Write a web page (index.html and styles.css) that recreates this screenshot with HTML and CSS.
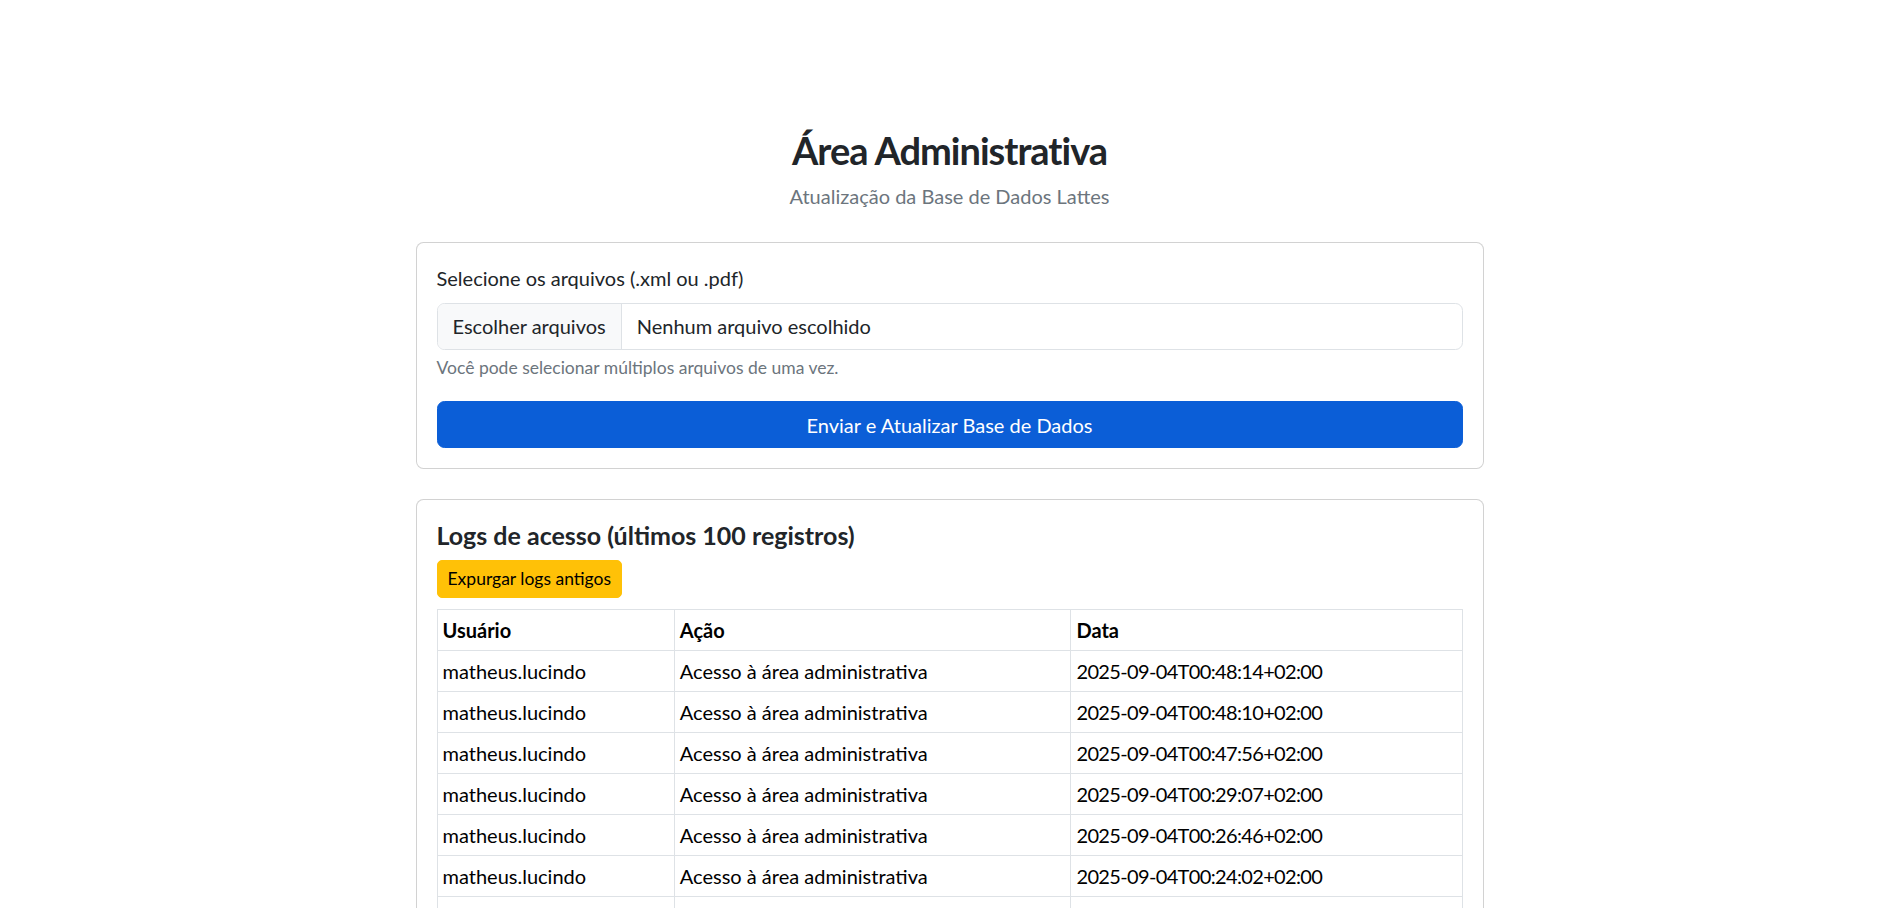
FILE: index.html
```html
<!DOCTYPE html>
<html lang="pt-BR">
<head>
<meta charset="utf-8">
<title>Área Administrativa</title>
<link rel="stylesheet" href="styles.css">
</head>
<body>
<main class="page">
  <header class="page-head">
    <h2 class="title">Área Administrativa</h2>
    <p class="subtitle">Atualização da Base de Dados Lattes</p>
  </header>

  <section class="card">
    <form class="upload">
      <div class="field">
        <label class="label">Selecione os arquivos (.xml ou .pdf)</label>
        <div class="file-input">
          <span class="file-btn">Escolher arquivos</span>
          <span class="file-name">Nenhum arquivo escolhido</span>
        </div>
        <div class="form-text">Você pode selecionar múltiplos arquivos de uma vez.</div>
      </div>
      <button type="button" class="btn-primary">Enviar e Atualizar Base de Dados</button>
    </form>
  </section>

  <section class="card card-logs">
    <h5 class="logs-title">Logs de acesso (últimos 100 registros)</h5>
    <button type="button" class="btn-warning">Expurgar logs antigos</button>
    <table class="logs">
      <colgroup>
        <col class="c-user"><col class="c-action"><col class="c-date">
      </colgroup>
      <thead>
        <tr><th>Usuário</th><th>Ação</th><th>Data</th></tr>
      </thead>
      <tbody>
        <tr><td>matheus.lucindo</td><td>Acesso à área administrativa</td><td class="date">2025-09-04T00:48:14+02:00</td></tr>
        <tr><td>matheus.lucindo</td><td>Acesso à área administrativa</td><td class="date">2025-09-04T00:48:10+02:00</td></tr>
        <tr><td>matheus.lucindo</td><td>Acesso à área administrativa</td><td class="date">2025-09-04T00:47:56+02:00</td></tr>
        <tr><td>matheus.lucindo</td><td>Acesso à área administrativa</td><td class="date">2025-09-04T00:29:07+02:00</td></tr>
        <tr><td>matheus.lucindo</td><td>Acesso à área administrativa</td><td class="date">2025-09-04T00:26:46+02:00</td></tr>
        <tr><td>matheus.lucindo</td><td>Acesso à área administrativa</td><td class="date">2025-09-04T00:24:02+02:00</td></tr>
        <tr><td>matheus.lucindo</td><td>Acesso à área administrativa</td><td class="date">2025-09-04T00:21:15+02:00</td></tr>
        <tr><td>matheus.lucindo</td><td>Acesso à área administrativa</td><td class="date">2025-09-04T00:18:40+02:00</td></tr>
        <tr><td>matheus.lucindo</td><td>Acesso à área administrativa</td><td class="date">2025-09-04T00:12:03+02:00</td></tr>
      </tbody>
    </table>
  </section>
</main>
</body>
</html>
```

FILE: styles.css
```css
* { box-sizing: border-box; }

html, body {
  margin: 0;
  padding: 0;
  background: #fff;
}

body {
  font-family: Lato, "Noto Sans", "Liberation Sans", sans-serif;
  font-size: 20px;
  line-height: 1.5;
  color: #212529;
}

.page {
  width: 1068px;
  margin-left: calc(50% - 533px);
  padding-top: 128px;
  padding-bottom: 40px;
}

.page-head {
  text-align: center;
}

.title {
  margin: 0 0 7.4px;
  font-size: 38px;
  line-height: 1.2;
  font-weight: 700;
  letter-spacing: -1px;
  color: #212529;
}

.subtitle {
  margin: 0 0 31px;
  color: #6c757d;
  line-height: 30px;
}

.card {
  border: 1px solid rgba(0, 0, 0, 0.175);
  border-radius: 7.5px;
  padding: 20px;
  background: #fff;
}

.card-logs {
  margin-top: 30px;
}

.field {
  margin-bottom: 20px;
}

.label {
  display: block;
  margin-bottom: 10px;
  line-height: 30px;
}

.file-input {
  display: flex;
  align-items: stretch;
  height: 47px;
  border: 1px solid #dee2e6;
  border-radius: 7.5px;
  overflow: hidden;
}

.file-btn {
  display: flex;
  align-items: center;
  padding: 0 15px;
  background: #f8f9fa;
  border-right: 1px solid #dee2e6;
  color: #212529;
}

.file-name {
  display: flex;
  align-items: center;
  padding-left: 15px;
  color: #212529;
}

.form-text {
  margin-top: 5px;
  font-size: 17.5px;
  line-height: 1.5;
  color: #6c757d;
}

.btn-primary {
  display: block;
  width: 100%;
  padding: 7.5px 15px;
  font: inherit;
  font-size: 20px;
  line-height: 30px;
  color: #fff;
  background: #0b5ed7;
  border: 1px solid #0b5ed7;
  border-radius: 7.5px;
  text-align: center;
}

.logs-title {
  margin: 0 0 10px;
  font-size: 25px;
  line-height: 30px;
  font-weight: 700;
  color: #212529;
}

.btn-warning {
  display: block;
  margin-bottom: 11px;
  padding: 5px 10px;
  font: inherit;
  font-size: 17.5px;
  line-height: 26.25px;
  color: #000;
  background: #ffc107;
  border: 1px solid #ffc107;
  border-radius: 5px;
}

.logs {
  width: 100%;
  border-collapse: collapse;
  color: #000;
}

.c-user { width: 23.15%; }
.c-action { width: 38.7%; }

.logs th,
.logs td {
  border: 1px solid #dee2e6;
  padding: 5px;
  line-height: 30px;
  text-align: left;
  vertical-align: top;
}

.logs th {
  font-weight: 700;
}

.logs .date {
  letter-spacing: -0.65px;
}
```
